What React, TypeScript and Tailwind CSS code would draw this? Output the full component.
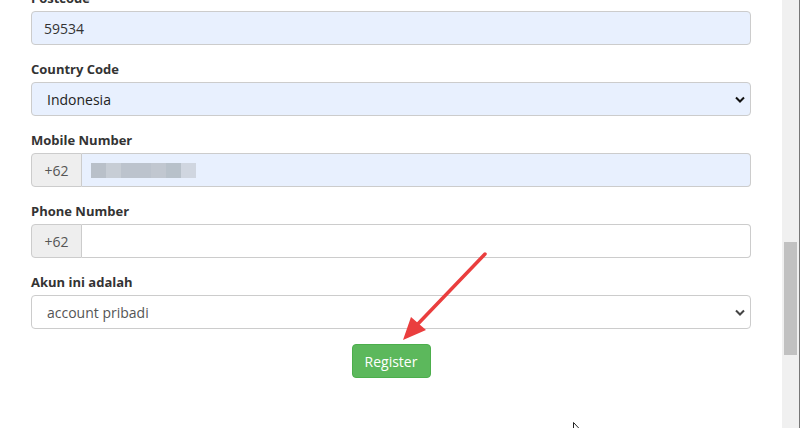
import React from 'react';

// grey blocks standing in for the pixelated mobile number
const blurBlocks = ['#b9c0c9', '#c7cdd5', '#bcc3cd', '#bcc3cd', '#c1c7d0', '#b8c1ca', '#d0d6e0'];

function Chevron({ color }: { color: string }) {
  return (
    <svg width="10" height="7" viewBox="0 0 10 7" className="shrink-0">
      <path d="M1 1.5 L5 5.5 L9 1.5" fill="none" stroke={color} strokeWidth="2" />
    </svg>
  );
}

function Label({ children }: { children: React.ReactNode }) {
  return <label className="mb-[4px] block text-[13px] font-bold leading-[17px] text-[#333]">{children}</label>;
}

export default function App() {
  return (
    <div className="flex h-[428px] w-[800px] overflow-hidden bg-white font-['Open_Sans',sans-serif]">
      {/* Page content */}
      <div className="relative flex-1">
        <div className="-mt-[10px] mx-[31px]">
          <div className="mb-[16px]">
            <Label>Postcode</Label>
            <div className="flex h-[34px] items-center rounded-[4px] border border-[#ccc] bg-[#e8f0fe] px-[12px] text-[14px] text-[#333]">
              59534
            </div>
          </div>

          <div className="mb-[16px]">
            <Label>Country Code</Label>
            <div className="flex h-[34px] items-center justify-between rounded-[4px] border border-[#ccc] bg-[#e8f0fe] pl-[15px] pr-[5px] text-[14px] text-[#222]">
              <span>Indonesia</span>
              <Chevron color="#111" />
            </div>
          </div>

          <div className="mb-[16px]">
            <Label>Mobile Number</Label>
            <div className="flex h-[34px] text-[14px]">
              <div className="flex w-[51px] items-center justify-center rounded-l-[4px] border border-[#ccc] bg-[#eee] text-[#555]">
                +62
              </div>
              <div className="flex flex-1 items-center rounded-r-[4px] border border-l-0 border-[#ccc] bg-[#e8f0fe] pl-[9px]">
                <div className="flex h-[15px]">
                  {blurBlocks.map((c, i) => (
                    <div key={i} className="h-full w-[15px]" style={{ backgroundColor: c }} />
                  ))}
                </div>
              </div>
            </div>
          </div>

          <div className="mb-[16px]">
            <Label>Phone Number</Label>
            <div className="flex h-[34px] text-[14px]">
              <div className="flex w-[51px] items-center justify-center rounded-l-[4px] border border-[#ccc] bg-[#eee] text-[#555]">
                +62
              </div>
              <div className="flex-1 rounded-r-[4px] border border-l-0 border-[#ccc] bg-white" />
            </div>
          </div>

          <div className="mb-[15px]">
            <Label>Akun ini adalah</Label>
            <div className="flex h-[34px] items-center justify-between rounded-[4px] border border-[#ccc] bg-white pl-[15px] pr-[5px] text-[14px] text-[#555]">
              <span>account pribadi</span>
              <Chevron color="#444" />
            </div>
          </div>

          <div className="flex justify-center">
            <button className="h-[34px] w-[79px] rounded-[4px] border border-[#4cae4c] bg-[#5cb85c] text-[14px] text-white">
              Register
            </button>
          </div>
        </div>

        {/* Annotation arrow drawn over the form */}
        <svg className="absolute left-0 top-0" width="782" height="428">
          <line x1="485" y1="254" x2="414" y2="328" stroke="#ea3e3e" strokeWidth="3.5" strokeLinecap="round" />
          <polygon points="403,340 411,317 426,330" fill="#ea3e3e" />
          {/* mouse pointer */}
          <path d="M573.5 422.5 L573.5 434 L576 431.5 L578.5 436 L580 435 L577.8 430.8 L581 430.5 Z" fill="#fff" stroke="#222" strokeWidth="1" />
        </svg>
      </div>

      {/* Scrollbar */}
      <div className="w-[17px] bg-[#f0f0f0] pl-[2px] pr-[2px] pt-[242px]">
        <div className="h-[113px] bg-[#c1c1c1]" />
      </div>
      <div className="w-px bg-[#777]" />
    </div>
  );
}
